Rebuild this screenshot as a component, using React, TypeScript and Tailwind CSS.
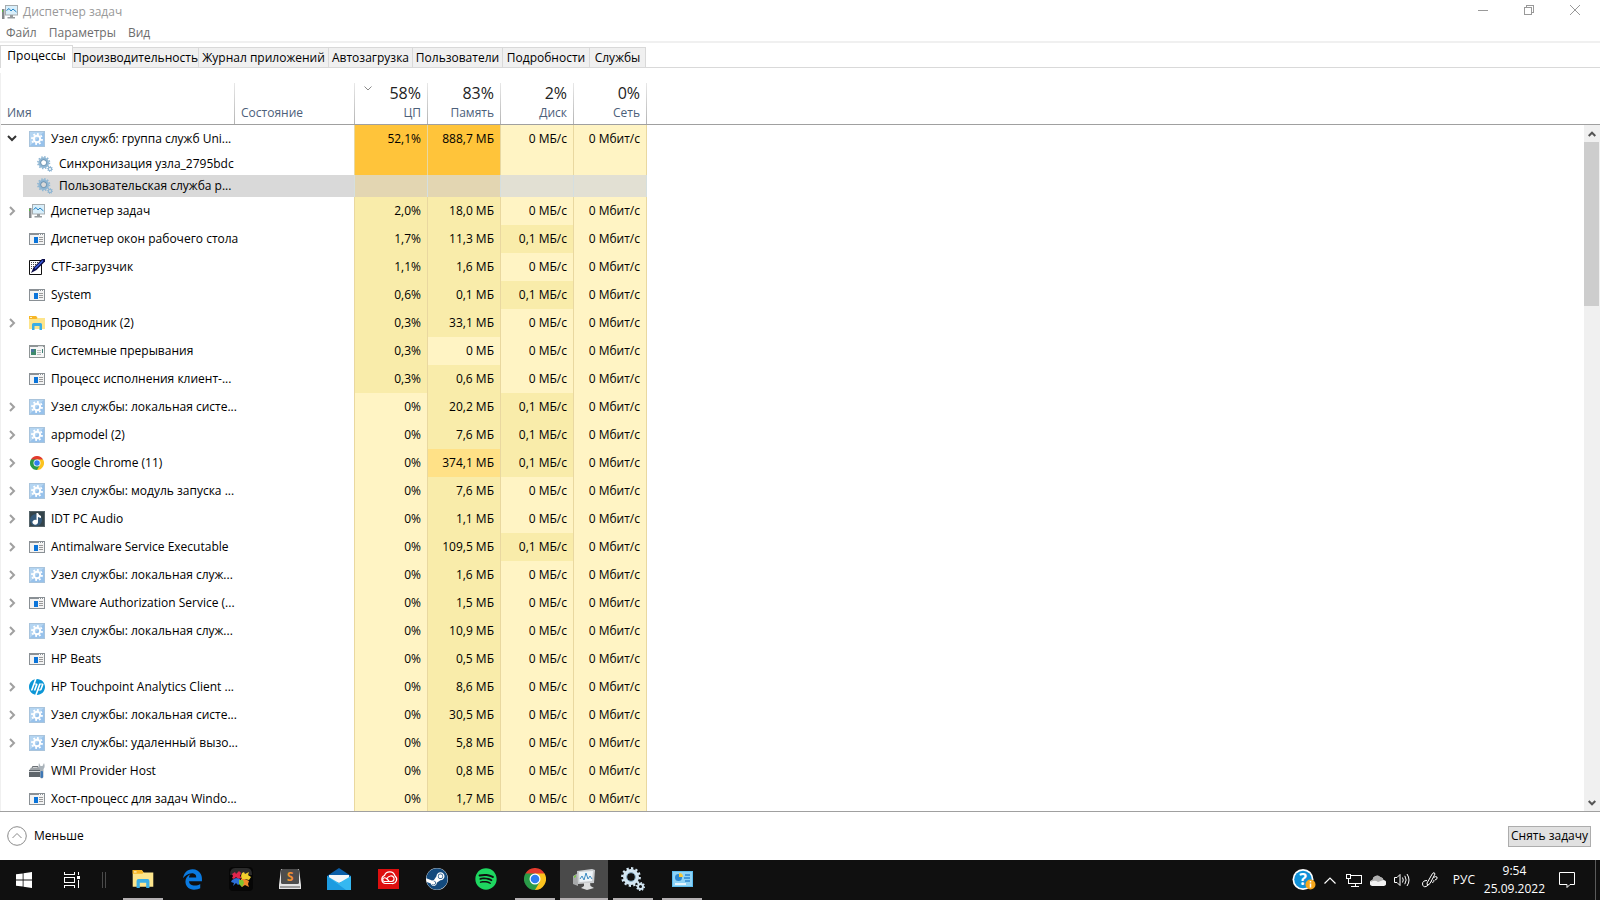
import React from 'react';
import { FaEdgeLegacy, FaSteam, FaSpotify } from 'react-icons/fa6';
import { SiHp } from 'react-icons/si';

type IconName =
  | 'service'
  | 'gears'
  | 'taskmgr'
  | 'window'
  | 'ctf'
  | 'explorer'
  | 'interrupts'
  | 'chrome'
  | 'audio'
  | 'hp'
  | 'wmi';

type Heat = 'low' | 'mid' | 'warm' | 'hot';

interface Process {
  name: string;
  icon: IconName;
  expand?: 'open' | 'closed';
  child?: boolean;
  selected?: boolean;
  values: string[];
  heat: Heat[];
}

const tabs = [
  { label: 'Производительность', width: 'w-[126px]' },
  { label: 'Журнал приложений', width: 'w-[130px]' },
  { label: 'Автозагрузка', width: 'w-[84px]' },
  { label: 'Пользователи', width: 'w-[90px]' },
  { label: 'Подробности', width: 'w-[87px]' },
  { label: 'Службы', width: 'w-[56px]' },
];

const columns = [
  { total: '58%', label: 'ЦП', sorted: true },
  { total: '83%', label: 'Память' },
  { total: '2%', label: 'Диск' },
  { total: '0%', label: 'Сеть' },
];

const heatColors: Record<Heat, string> = {
  low: 'bg-[#fff4c4]',
  mid: 'bg-[#f9ecaa]',
  warm: 'bg-[#ffe187]',
  hot: 'bg-[#ffc43a]',
};

const row = (
  name: string,
  icon: IconName,
  expandable: boolean,
  cpu: string,
  memory: string,
  disk: string,
  memoryHeat: Heat = 'mid'
): Process => ({
  name,
  icon,
  expand: expandable ? 'closed' : undefined,
  values: [cpu, memory, disk + ' МБ/с', '0 Мбит/с'],
  heat: [cpu === '0%' ? 'low' : 'mid', memoryHeat, disk === '0' ? 'low' : 'mid', 'low'],
});

const processes: Process[] = [
  {
    name: 'Узел служб: группа служб Uni...',
    icon: 'service',
    expand: 'open',
    values: ['52,1%', '888,7 МБ', '0 МБ/с', '0 Мбит/с'],
    heat: ['hot', 'hot', 'low', 'low'],
  },
  {
    name: 'Синхронизация узла_2795bdc',
    icon: 'gears',
    child: true,
    values: ['', '', '', ''],
    heat: ['hot', 'hot', 'low', 'low'],
  },
  {
    name: 'Пользовательская служба p...',
    icon: 'gears',
    child: true,
    selected: true,
    values: ['', '', '', ''],
    heat: ['hot', 'hot', 'low', 'low'],
  },
  row('Диспетчер задач', 'taskmgr', true, '2,0%', '18,0 МБ', '0'),
  row('Диспетчер окон рабочего стола', 'window', false, '1,7%', '11,3 МБ', '0,1'),
  row('CTF-загрузчик', 'ctf', false, '1,1%', '1,6 МБ', '0'),
  row('System', 'window', false, '0,6%', '0,1 МБ', '0,1'),
  row('Проводник (2)', 'explorer', true, '0,3%', '33,1 МБ', '0'),
  row('Системные прерывания', 'interrupts', false, '0,3%', '0 МБ', '0', 'low'),
  row('Процесс исполнения клиент-...', 'window', false, '0,3%', '0,6 МБ', '0'),
  row('Узел службы: локальная систе...', 'service', true, '0%', '20,2 МБ', '0,1'),
  row('appmodel (2)', 'service', true, '0%', '7,6 МБ', '0,1'),
  row('Google Chrome (11)', 'chrome', true, '0%', '374,1 МБ', '0,1', 'warm'),
  row('Узел службы: модуль запуска ...', 'service', true, '0%', '7,6 МБ', '0'),
  row('IDT PC Audio', 'audio', true, '0%', '1,1 МБ', '0'),
  row('Antimalware Service Executable', 'window', true, '0%', '109,5 МБ', '0,1'),
  row('Узел службы: локальная служ...', 'service', true, '0%', '1,6 МБ', '0'),
  row('VMware Authorization Service (...', 'window', true, '0%', '1,5 МБ', '0'),
  row('Узел службы: локальная служ...', 'service', true, '0%', '10,9 МБ', '0'),
  row('HP Beats', 'window', false, '0%', '0,5 МБ', '0'),
  row('HP Touchpoint Analytics Client ...', 'hp', true, '0%', '8,6 МБ', '0'),
  row('Узел службы: локальная систе...', 'service', true, '0%', '30,5 МБ', '0'),
  row('Узел службы: удаленный вызо...', 'service', true, '0%', '5,8 МБ', '0'),
  row('WMI Provider Host', 'wmi', false, '0%', '0,8 МБ', '0'),
  row('Хост-процесс для задач Windo...', 'window', false, '0%', '1,7 МБ', '0'),
];

const ChromeIcon: React.FC<{ className: string }> = ({ className }) => (
  <svg viewBox="0 0 48 48" className={className}>
    <path d="M24 24 L3.2 12 A24 24 0 0 1 44.8 12 Z" fill="#e33b2e" />
    <path d="M24 24 L3.2 12 A24 24 0 0 0 24 48 Z" fill="#2a9a48" />
    <path d="M24 24 L44.8 12 A24 24 0 0 1 24 48 Z" fill="#fcc31e" />
    <path d="M24 12 H44.8 L34.4 30 Z" fill="#fcc31e" />
    <path d="M13.6 30 L3.2 12 L24 12 Z" fill="#2a9a48" />
    <path d="M13.6 30 L34.4 30 L24 48 Z" fill="#2a9a48" />
    <circle cx="24" cy="24" r="12" fill="#fff" />
    <circle cx="24" cy="24" r="9.4" fill="#2f7df0" />
  </svg>
);

const FolderIcon: React.FC<{ className: string }> = ({ className }) => (
  <svg viewBox="0 0 16 14" className={className}>
    <path d="M0 0 H7 L8.5 2 H16 V13 H0 Z" fill="#fde58c" />
    <path d="M0 0 H7 L8.5 2 L7.500 3 H0 Z" fill="#f7b627" />
    <path d="M1 1 H3 V2 H1 Z" fill="#fff3c4" />
    <path d="M3 14 V8.500 Q3 7 4.500 7 H11.500 Q13 7 13 8.500 V14 H10.500 V10 H5.500 V14 Z" fill="#3aaee6" />
  </svg>
);

const TaskMgrIcon: React.FC<{ className: string }> = ({ className }) => (
  <svg viewBox="0 0 16 14" className={className}>
    <rect x="0" y="4" width="2.500" height="10" fill="#85898c" />
    <rect x="0" y="5" width="1" height="2" fill="#5fc043" />
    <rect x="3.500" y=".5" width="12" height="9.500" fill="#d9effb" stroke="#a6acaf" />
    <path d="M4.500 5.500 L7 3.500 L9 6 L11 4 L14.500 7" fill="none" stroke="#2484c6" />
    <path d="M8 10 H11 V12 H13 V13.500 H5.500 V12 H8 Z" fill="#969b9e" />
  </svg>
);

const GearsIcon: React.FC<{ className: string; color: string; hub: string }> = ({ className, color, hub }) => (
  <svg viewBox="0 0 24 24" className={className} fill="none" stroke={color}>
    <circle cx="10" cy="10" r="6" strokeWidth="4" />
    <circle cx="10" cy="10" r="8.700" strokeWidth="2.400" pathLength="24" strokeDasharray="1 1" />
    <circle cx="10" cy="10" r="4.400" stroke={hub} strokeWidth="1" />
    <circle cx="19.500" cy="19.500" r="2.500" strokeWidth="2" />
    <circle cx="19.500" cy="19.500" r="3.800" strokeWidth="1.500" pathLength="16" strokeDasharray="1 1" />
  </svg>
);

const ProcessIcon: React.FC<{ name: IconName }> = ({ name }) => {
  switch (name) {
    case 'service':
      return (
        <svg viewBox="0 0 16 16" className="size-4 shrink-0">
          <rect width="16" height="16" fill="#a9c4dc" />
          <path d="M1 1 H15 L1 15 Z" fill="#b4d5f2" />
          <path d="M15 1 V15 H1 Z" fill="#97c2ec" />
          <circle cx="8" cy="8" r="3.200" fill="none" stroke="#fff" strokeWidth="2" />
          <circle cx="8" cy="8" r="5" fill="none" stroke="#fff" strokeWidth="1.800" pathLength="16" strokeDasharray="1 1" />
        </svg>
      );
    case 'gears':
      return <GearsIcon className="size-4 shrink-0" color="#8fb6d3" hub="#567f9f" />;
    case 'taskmgr':
      return <TaskMgrIcon className="h-3.5 w-4 shrink-0" />;
    case 'explorer':
      return <FolderIcon className="h-3.5 w-4 shrink-0" />;
    case 'chrome':
      return <ChromeIcon className="size-3.5 shrink-0" />;
    case 'hp':
      return <SiHp className="size-4 shrink-0 text-[#0b96d6]" />;
    case 'window':
      return (
        <svg viewBox="0 0 16 12" className="h-3 w-4 shrink-0" shapeRendering="crispEdges">
          <rect width="16" height="12" fill="#8a9095" />
          <rect x="1" y="2" width="14" height="9" fill="#f3f3f3" />
          <rect x="10" y="1" width="1" height="1" fill="#fff" />
          <rect x="12" y="1" width="1" height="1" fill="#fff" />
          <rect x="14" y="1" width="1" height="1" fill="#fff" />
          <rect x="5" y="4" width="4" height="6" fill="#0a74da" />
          <path d="M10 4 H14 V5 H10 Z M10 6 H14 V7 H10 Z M10 8 H14 V9 H10 Z" fill="#9a9a9a" />
        </svg>
      );
    case 'interrupts':
      return (
        <svg viewBox="0 0 16 13" className="h-[13px] w-4 shrink-0" shapeRendering="crispEdges">
          <rect width="16" height="13" fill="#8f9596" />
          <rect x="1" y="2" width="14" height="10" fill="#f7f7f7" />
          <rect x="9" y="1" width="5" height="1" fill="#d9dcdd" />
          <rect x="2" y="4" width="5" height="6" fill="#3f8a6c" />
          <rect x="2" y="4" width="3" height="3" fill="#48739c" />
          <path d="M8 5 H12 V6 H8 Z M8 7 H12 V8 H8 Z M8 9 H12 V10 H8 Z" fill="#b9bdbe" />
          <rect x="13" y="4" width="1" height="4" fill="#3b7f74" />
        </svg>
      );
    case 'ctf':
      return (
        <svg viewBox="0 0 16 16" className="size-4 shrink-0">
          <path d="M.5 1.500 H12.500 V15.500 H.5 Z" fill="#fff" stroke="#111" />
          <path d="M2 3.500 H10 M2 5.500 H9 M2 7.500 H7 M2 9.500 H5" stroke="#444" strokeDasharray="1 1" />
          <path d="M2 14 L4.500 8.500 L13 0 H16 V2.500 L7.500 11 Z" fill="#0c0c48" />
          <path d="M6 9.500 L14 1.500" stroke="#3a5fe0" strokeWidth="1.500" />
        </svg>
      );
    case 'audio':
      return (
        <svg viewBox="0 0 16 16" className="size-4 shrink-0">
          <rect x=".5" y=".5" width="15" height="15" fill="#34444b" stroke="#56646a" />
          <circle cx="7" cy="9" r="6" fill="#34597a" />
          <path d="M7.500 2 H9 Q9.500 4 12 5 V7 Q10 6.500 9 6 V11 A2.800 2.500 0 1 1 7.500 9 Z" fill="#fff" />
        </svg>
      );
    case 'wmi':
      return (
        <svg viewBox="0 0 16 16" className="size-4 shrink-0">
          <path d="M3.500 5 V3.500 H9 V5" fill="none" stroke="#6b7075" />
          <path d="M0 7.500 L2 4.500 H11 V7.500 Z" fill="#9da2a6" />
          <rect x="0" y="7" width="12" height="7" fill="#5f666b" />
          <rect x="0" y="8" width="11" height="1" fill="#d4d7d9" />
          <path d="M10 0 L11.500 3 H13.500 L15 0 Q16.500 4 14.500 6 V14 Q12.700 17 11 14 V6 Q9 4 10 0 Z" fill="#aab3ba" />
          <rect x="11.500" y="8" width="2.500" height="7" rx="1" fill="#3f78b5" />
        </svg>
      );
  }
};

const Chevron: React.FC<{ state?: 'open' | 'closed' }> = ({ state }) => {
  if (!state) return <span className="w-2 shrink-0" />;
  return (
    <button aria-label={state === 'open' ? 'Свернуть' : 'Развернуть'} className="flex w-2 shrink-0 justify-center">
      {state === 'open' ? (
        <svg viewBox="0 0 10 10" className="size-2.5 shrink-0" fill="none" stroke="#333" strokeWidth="2">
          <path d="M1 2 L5 6 L9 2" />
        </svg>
      ) : (
        <svg viewBox="0 0 10 10" className="size-2.5 shrink-0" fill="none" stroke="#a0a0a0" strokeWidth="2">
          <path d="M3 1 L7 5 L3 9" />
        </svg>
      )}
    </button>
  );
};

const ProcessRow: React.FC<{ process: Process }> = ({ process }) => {
  const { name, icon, expand, child, selected, values, heat } = process;
  const height = child ? 'h-[22px]' : 'h-7';
  return (
    <tr className={height}>
      <td className="p-0">
        {child ? (
          <div className={`ml-[22px] flex h-[22px] items-center gap-1.5 pl-3.5 ${selected ? 'bg-[#d9d9d9]' : ''}`}>
            <ProcessIcon name={icon} />
            <span className="whitespace-nowrap">{name}</span>
          </div>
        ) : (
          <div className="flex h-7 items-center pl-[7px]">
            <Chevron state={expand} />
            <span className="ml-[13px] flex w-4 shrink-0 justify-center">
              <ProcessIcon name={icon} />
            </span>
            <span className="ml-1.5 whitespace-nowrap">{name}</span>
          </div>
        )}
      </td>
      <td className={`p-0 ${selected ? 'bg-[#d9d9d9]' : ''}`} />
      {values.map((value, i) => {
        const color = selected ? (i < 2 ? 'bg-[#e3d6b2]' : 'bg-[#e2e0d3]') : heatColors[heat[i]];
        const border = selected ? 'border-[#d5dfdf]' : 'border-[#e9d8a0]';
        return (
          <td key={i} className={`border-l p-0 pr-1.5 text-right whitespace-nowrap ${border} ${color}`}>
            {value}
          </td>
        );
      })}
      <td className={`border-l p-0 ${selected ? 'border-[#d5dfdf]' : 'border-[#e9d8a0]'}`} />
    </tr>
  );
};

const headerLine = 'bg-[linear-gradient(#e8e8e8,#b4b4b4)] bg-[length:1px_100%] bg-left bg-no-repeat';

const ProcessTable: React.FC = () => (
  <div className="flex min-h-0 flex-1 overflow-hidden border-b border-[#a0a0a0]">
    <div className="min-w-0 flex-1 overflow-hidden border-l border-[#f0f0f0]">
      <table className="w-full table-fixed border-separate border-spacing-0">
        <colgroup>
          <col className="w-[233px]" />
          <col className="w-[120px]" />
          <col className="w-[73px]" />
          <col className="w-[73px]" />
          <col className="w-[73px]" />
          <col className="w-[73px]" />
          <col />
        </colgroup>
        <thead>
          <tr className="h-[42px] text-[#4c607a]">
            <th className="border-b border-[#a0a0a0] p-0 pb-[3px] pl-1.5 text-left align-bottom font-normal">Имя</th>
            <th className={`border-b border-[#a0a0a0] p-0 pb-[3px] pl-[7px] text-left align-bottom font-normal ${headerLine}`}>
              Состояние
            </th>
            {columns.map(column => (
              <th
                key={column.label}
                className={`border-b border-[#a0a0a0] p-0 pr-1.5 pb-[3px] text-right align-bottom font-normal ${headerLine}`}
              >
                <div className="mb-1 flex items-start justify-end">
                  {column.sorted && (
                    <svg viewBox="0 0 8 5" className="mt-px mr-auto ml-2.5 h-[5px] w-2" fill="none" stroke="#8a8a8a">
                      <path d="M.5 .5 L4 4 L7.500 .5" />
                    </svg>
                  )}
                  <span className="text-base leading-4 text-[#222]">{column.total}</span>
                </div>
                <div>{column.label}</div>
              </th>
            ))}
            <th className={`border-b border-[#a0a0a0] p-0 ${headerLine}`} />
          </tr>
        </thead>
        <tbody>
          {processes.map((process, i) => (
            <ProcessRow key={i} process={process} />
          ))}
        </tbody>
      </table>
    </div>
    <div className="flex w-4 flex-col bg-[#f0f0f0]">
      <div className="h-[42px] shrink-0 border-b border-[#a0a0a0] bg-white" />
      <button aria-label="Вверх" className="flex h-[17px] shrink-0 items-center justify-center">
        <svg viewBox="0 0 8 6" className="h-1.5 w-2" fill="none" stroke="#555" strokeWidth="2">
          <path d="M.7 5 L4 1.700 L7.300 5" />
        </svg>
      </button>
      <div className="mr-px h-[164px] bg-[#cdcdcd]" />
      <div className="flex-1" />
      <button aria-label="Вниз" className="flex h-[17px] shrink-0 items-center justify-center">
        <svg viewBox="0 0 8 6" className="h-1.5 w-2" fill="none" stroke="#555" strokeWidth="2">
          <path d="M.7 1 L4 4.300 L7.300 1" />
        </svg>
      </button>
    </div>
  </div>
);

const taskbarApps: { label: string; state?: 'running' | 'active'; icon: React.ReactNode }[] = [
  { label: 'Проводник', state: 'running', icon: <FolderIcon className="h-[18px] w-[22px]" /> },
  { label: 'Microsoft Edge', icon: <FaEdgeLegacy className="size-[21px] text-[#0a7ae0]" /> },
  {
    label: 'Пазл',
    icon: (
      <svg viewBox="0 0 24 24" className="size-6">
        <rect width="24" height="24" rx="4" fill="#060606" />
        <path d="M1 8 Q1 1 6 1 H18 Q23 1 23 8 Z" fill="#2c2c2c" />
        <path d="M3 7 L6 5 L7 7 L10 4 L12 6 L11 9 L13 11 L9 12 L7 10 L5 12 L3 11 L4 9 Z" fill="#e0264d" />
        <path d="M13 6 L15 5 L16 7 L20 5 L19 8 L22 10 L20 13 L16 12 L13 13 L12 9 Z" fill="#f3d02c" />
        <path d="M3 13 L7 11 L11 12 L12 16 L9 18 L7 16 L4 19 L5 16 L2 15 Z" fill="#2c6fd6" />
        <path d="M12 12 L16 12 L20 14 L19 17 L20 20 L16 18 L13 20 L11 17 Z" fill="#f0892a" />
        <path d="M10 13 L14 13 L15 16 L13 20 L10 17 Z" fill="#7fc32e" />
      </svg>
    ),
  },
  {
    label: 'Sublime Text',
    icon: (
      <svg viewBox="0 0 22 20" className="h-5 w-[22px]">
        <path d="M2 0 H20 L22 16 V20 H0 V16 Z" fill="#e4e4e4" />
        <rect x="2" y="0" width="18" height="15" rx="1.500" fill="#4d4d4d" />
        <path d="M1 17 H21 V19 H1 Z" fill="#9b9b9b" />
        <text x="11" y="12" textAnchor="middle" fontSize="12" fontWeight="700" fill="#f39231">
          S
        </text>
      </svg>
    ),
  },
  {
    label: 'Почта',
    icon: (
      <svg viewBox="0 0 24 22" className="h-[22px] w-6">
        <path d="M0 8 L12 0 L24 8 V12 H0 Z" fill="#0a5ea8" />
        <path d="M2 7 H22 V12 L12 15 L2 12 Z" fill="#f4f6f8" />
        <path d="M0 8 L12 15 L24 8 V22 H0 Z" fill="#35b8f1" />
        <path d="M0 22 V8 L19 22 Z" fill="#1c9be0" />
      </svg>
    ),
  },
  {
    label: 'Creative Cloud',
    icon: (
      <svg viewBox="0 0 21 20" className="h-5 w-[21px]">
        <rect width="21" height="20" fill="#dd0f0f" />
        <g fill="none" stroke="#fff" strokeWidth="1.200">
          <path d="M7 14.500 A4.200 4.200 0 0 1 6.500 6.500 A5.500 5.500 0 0 1 17 7 A4.200 4.200 0 0 1 14 14.500 Z" />
          <path d="M11 12 L8.500 9.500 Q6.500 8 5 9.500 Q4 12 6.500 12.500 H13.500 Q16.500 12 16 9 Q15 6.500 12.500 7 Q10 7.500 9 9.500" />
        </g>
      </svg>
    ),
  },
  {
    label: 'Steam',
    icon: (
      <span className="rounded-full bg-white">
        <FaSteam className="size-[22px] text-[#134a7d]" />
      </span>
    ),
  },
  { label: 'Spotify', icon: <FaSpotify className="size-[22px] text-[#1ed760]" /> },
  { label: 'Google Chrome', state: 'running', icon: <ChromeIcon className="size-[22px]" /> },
  {
    label: 'Диспетчер задач',
    state: 'active',
    icon: (
      <svg viewBox="0 0 24 22" className="h-[22px] w-6">
        <path d="M1 8 L6 5 V18 L1 16 Z" fill="#a7a9aa" />
        <path d="M2 8 L4 7 V9 L2 10 Z" fill="#7ac943" />
        <path d="M5 3 L20 1 L23 2 L22 15 L6 16 Z" fill="#c9cccf" />
        <path d="M7 4 L21 3 L20 13 L7.500 14 Z" fill="#eef4f8" />
        <path d="M8 11 L10 8 L12 12 L14 5 L16 11 L18 8 L20 11" fill="none" stroke="#3d8cc4" />
        <path d="M12 15 H18 L18.500 18 L22 20 L15 22 L9 20 L12 18 Z" fill="#dcdedf" />
      </svg>
    ),
  },
  { label: 'Службы', state: 'running', icon: <GearsIcon className="size-6" color="#d3e6f2" hub="#7fa4bb" /> },
  {
    label: 'Панель управления',
    state: 'running',
    icon: (
      <svg viewBox="0 0 21 16" className="h-4 w-[21px]">
        <rect width="21" height="16" fill="#5cbdf0" />
        <rect x="1" y="1" width="19" height="14" fill="#8ed3f7" />
        <circle cx="6.500" cy="6.500" r="3.500" fill="#2b86cf" />
        <path d="M7 6 V2 A4 4 0 0 1 11 6 Z" fill="#f8c83a" />
        <path d="M13 4 H18 M12 7 H18 M13 10 H18" stroke="#2b86cf" strokeWidth="1.500" />
        <path d="M3 13 H14" stroke="#fff" strokeWidth="1.500" />
      </svg>
    ),
  },
];

const Taskbar: React.FC = () => (
  <footer className="flex h-10 shrink-0 items-stretch bg-[#101010] text-white">
    <button aria-label="Пуск" className="flex w-12 items-center justify-center">
      <svg viewBox="0 0 16 16" className="size-4" fill="#fff">
        <path d="M0 2.300 L6.700 1.400 V7.600 H0 Z M7.500 1.300 L16 0 V7.600 H7.500 Z M0 8.400 H6.700 V14.600 L0 13.700 Z M7.500 8.400 H16 V16 L7.500 14.700 Z" />
      </svg>
    </button>
    <button aria-label="Представление задач" className="flex w-12 items-center justify-center">
      <svg viewBox="0 0 16 16" className="size-4" fill="none" stroke="#fff" shapeRendering="crispEdges">
        <path d="M.5 0 V2.500 H10.500 V0 M.5 16 V13.500 H10.500 V16 M.5 5.500 H10.500 V10.500 H.5 Z M14.500 0 V3 M14.500 8 V16" />
        <rect x="13" y="4" width="3" height="3" fill="#fff" stroke="none" />
      </svg>
    </button>
    <div className="mr-[13px] ml-1.5 flex w-1 items-center justify-between">
      <span className="h-4 w-px bg-[#4a4a4a]" />
      <span className="h-4 w-px bg-[#4a4a4a]" />
    </div>
    <nav className="flex gap-px">
      {taskbarApps.map(app => (
        <button
          key={app.label}
          aria-label={app.label}
          className={`flex w-12 flex-col items-center ${app.state === 'active' ? 'bg-[#4a4a4a]' : ''}`}
        >
          <span className="flex flex-1 items-center">{app.icon}</span>
          {app.state && <span className={`h-0.5 bg-[#b4b0b2] ${app.state === 'active' ? 'w-12' : 'w-10'}`} />}
          {!app.state && <span className="h-0.5" />}
        </button>
      ))}
    </nav>
    <div className="ml-auto flex items-center">
      <svg viewBox="0 0 24 24" className="mr-2 size-6">
        <circle cx="11" cy="11.500" r="10.500" fill="#fff" />
        <circle cx="11" cy="11.500" r="8.800" fill="#1191d8" />
        <text x="11" y="17" textAnchor="middle" fontSize="16" fontWeight="700" fill="#fff">
          ?
        </text>
        <circle cx="18.500" cy="16.500" r="5" fill="#f6a71c" />
        <path d="M18.500 15.500 V19.500 M18.500 13 V14.500" stroke="#fff" strokeWidth="1.500" />
      </svg>
      <svg viewBox="0 0 12 7" className="mr-2.5 h-[7px] w-3" fill="none" stroke="#fff" strokeWidth="1.200">
        <path d="M.5 6.500 L6 1 L11.500 6.500" />
      </svg>
      <svg viewBox="0 0 16 14" className="mr-2 h-3.5 w-4" fill="none" stroke="#fff" shapeRendering="crispEdges">
        <path d="M5 2.500 H15.500 V10.500 H2.500 V5.500 M9.500 10.500 V13.500 M5 13.500 H13 M.5 1.500 H4.500 V5.500 H.5 Z" />
      </svg>
      <svg viewBox="0 0 16 11" className="mr-2 h-[11px] w-4">
        <path d="M3 11 A3 3 0 0 1 2.500 5 A4.500 4.500 0 0 1 10 2 Q13 2.500 13.500 5 A3 3 0 0 1 13 11 Z" fill="#f2f2f2" />
        <path d="M.8 6 Q1.500 5 2.500 5 A4.500 4.500 0 0 1 10 1.800 Q13 2.500 13.500 5 L8 7 Q5 4.500 .8 7 Z" fill="#b0b0b0" />
      </svg>
      <svg viewBox="0 0 16 14" className="mr-3 h-3.5 w-4" fill="none" stroke="#fff">
        <path d="M.5 4.500 H3 L6 1.500 V12.500 L3 9.500 H.5 Z M8.500 4.500 Q10 7 8.500 9.500 M10.800 2.800 Q13.500 7 10.800 11.200 M13 1 Q17 7 13 13" />
      </svg>
      <svg viewBox="0 0 16 16" className="mr-[15px] size-4" fill="none" stroke="#fff">
        <path d="M5 11 L10.500 1.500 Q12.500 -.5 13 2 L8 11.500 L5.500 13.500 Z M5 8.500 Q.5 8.500 .5 12 Q1 15.500 4 14.500 Q6 14 6 12 M9.500 9.500 Q11.500 12 12 8 M13 8 Q16 7 15 5 Q13.500 4 11.500 5.500" />
      </svg>
      <span className="w-[23px]">РУС</span>
      <div className="ml-2 flex flex-col items-center leading-[18px] whitespace-nowrap">
        <span>9:54</span>
        <span>25.09.2022</span>
      </div>
      <button aria-label="Уведомления" className="ml-2.5 px-1">
        <svg viewBox="0 0 16 16" className="size-4" fill="none" stroke="#fff">
          <path d="M.5 .5 H15.500 V12.500 H11 L8 15.500 V12.500 H.5 Z" />
        </svg>
      </button>
      <span className="ml-4 h-10 w-[5px] border-l border-[#5a5a5a]" />
    </div>
  </footer>
);

const App: React.FC = () => (
  <div className="flex h-screen flex-col overflow-hidden bg-white font-['Open_Sans','Noto_Sans',sans-serif] text-xs text-black">
    <header className="flex h-6 shrink-0 items-start">
      <div className="flex h-6 items-center gap-[5px] pl-0.5 text-[#999]">
        <TaskMgrIcon className="h-3.5 w-4" />
        <h1>Диспетчер задач</h1>
      </div>
      <div className="ml-auto flex h-5 items-center gap-9 pr-5">
        <button aria-label="Свернуть окно">
          <svg viewBox="0 0 10 10" className="size-2.5" stroke="#999" shapeRendering="crispEdges">
            <path d="M0 5.500 H10" />
          </svg>
        </button>
        <button aria-label="Развернуть окно">
          <svg viewBox="0 0 10 10" className="size-2.5" fill="none" stroke="#999" shapeRendering="crispEdges">
            <path d="M.5 2.500 H7.500 V9.500 H.5 Z M2.500 2 V.5 H9.500 V7.500 H8" />
          </svg>
        </button>
        <button aria-label="Закрыть">
          <svg viewBox="0 0 10 10" className="size-2.5" stroke="#999">
            <path d="M0 0 L10 10 M10 0 L0 10" />
          </svg>
        </button>
      </div>
    </header>

    <nav className="flex h-[19px] shrink-0 items-center gap-3 border-b-2 border-[#f0f0f0] pl-1.5 text-[#6d6d6d]">
      <button>Файл</button>
      <button>Параметры</button>
      <button>Вид</button>
    </nav>

    <div className="flex h-[25px] shrink-0 items-end border-b border-[#d9d9d9]">
      <button className="-mb-px h-[23px] w-[73px] border-t border-r border-l border-[#d9d9d9] bg-white pb-0.5">
        Процессы
      </button>
      {tabs.map(tab => (
        <button
          key={tab.label}
          className={`flex h-5 items-center justify-center border-t border-r border-[#d9d9d9] bg-[#f0f0f0] whitespace-nowrap ${tab.width}`}
        >
          {tab.label}
        </button>
      ))}
    </div>

    <div className="mt-[5px] h-2.5 shrink-0 border-l border-[#f0f0f0]" />
    <ProcessTable />

    <div className="flex h-12 shrink-0 items-center justify-between pr-[9px] pl-[7px]">
      <button className="flex items-center gap-[7px]">
        <svg viewBox="0 0 20 20" className="size-5" fill="none" stroke="#8a8a8a">
          <circle cx="10" cy="10" r="9.300" />
          <path d="M5.500 12 L10 7.500 L14.500 12" />
        </svg>
        Меньше
      </button>
      <button className="h-[21px] w-[83px] border border-[#adadad] bg-[#e1e1e1] whitespace-nowrap">Снять задачу</button>
    </div>

    <Taskbar />
  </div>
);

export default App;
